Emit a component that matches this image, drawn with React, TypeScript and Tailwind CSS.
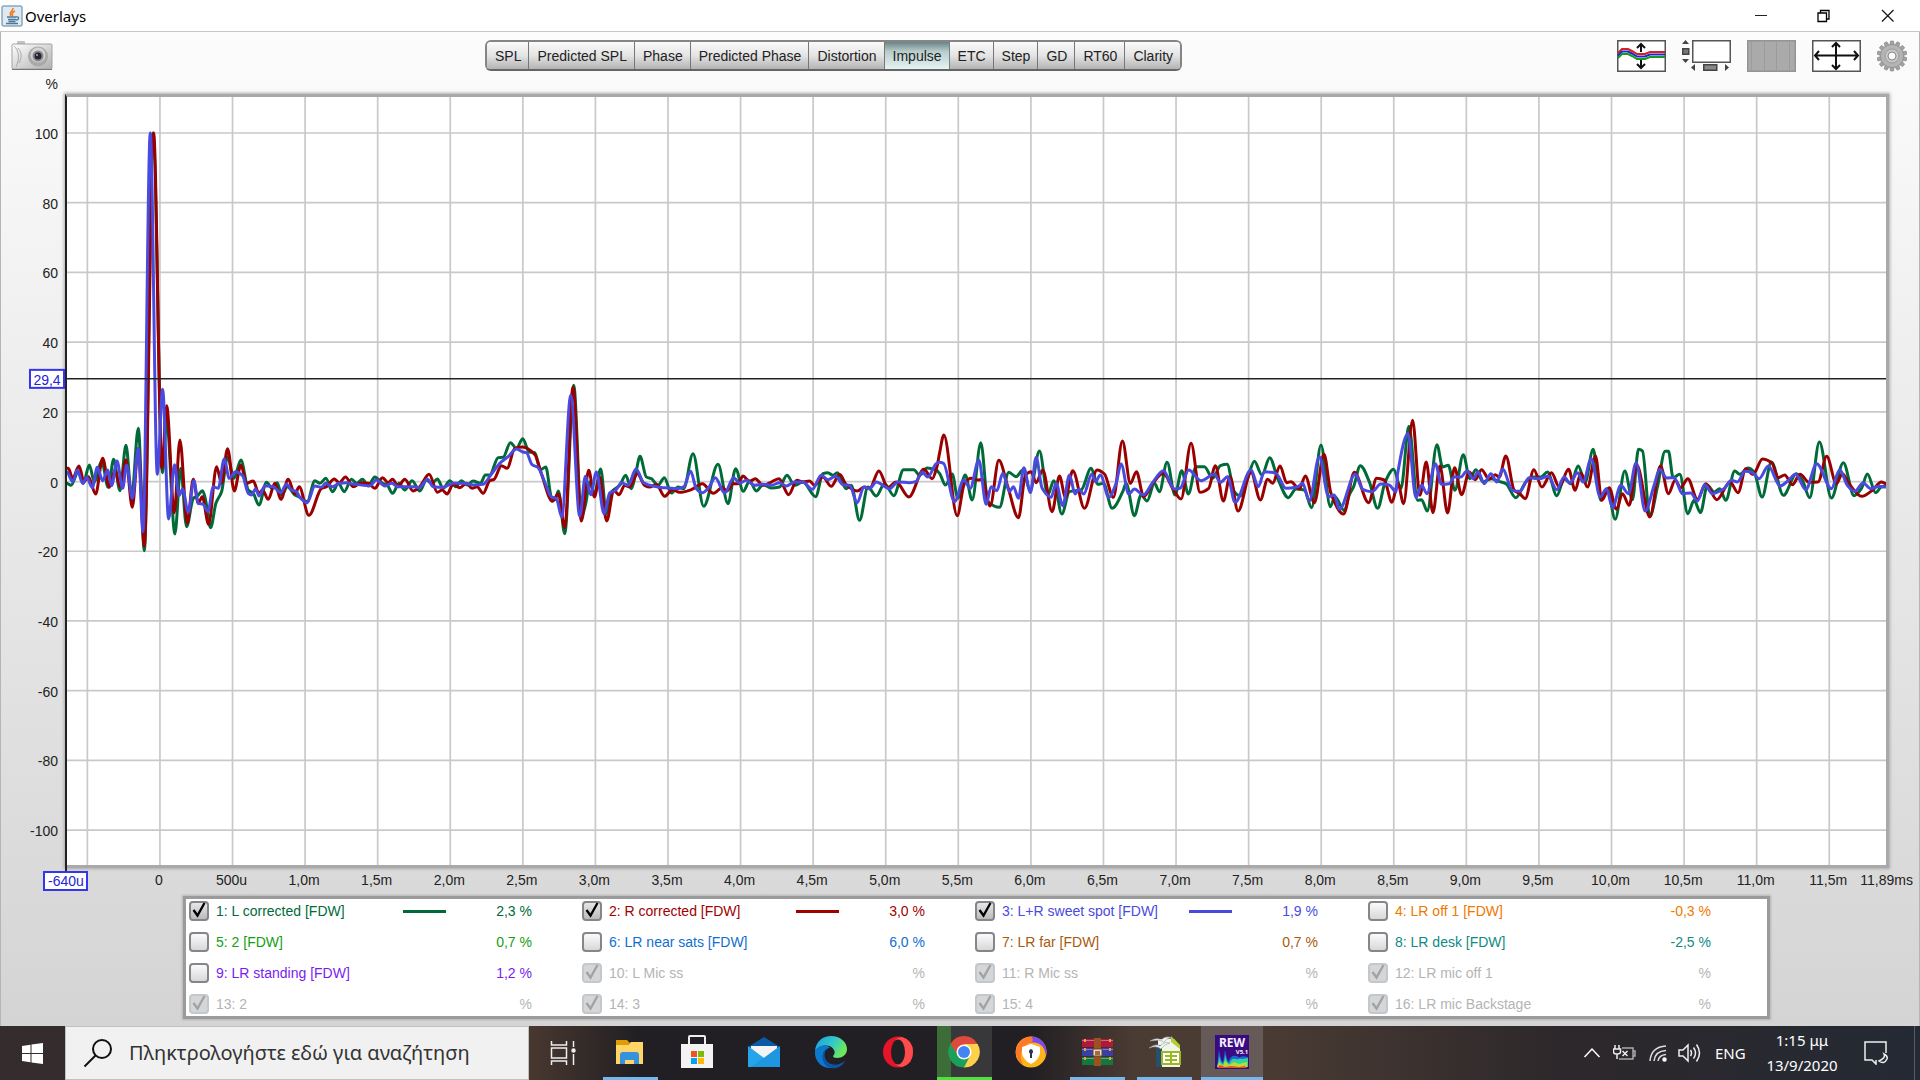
import React from "react";

// The record is stored in four chunks, each with its own start and zero level.
const CHUNKS = [
  { x: -21, zero: 424 },
  { x: 1299, zero: 333 },
  { x: 2619, zero: 184 },
  { x: 3999, zero: 243 },
];

const LEFT = [
  "20,430 33,436 55,395 70,430 88,375 103,425 125,365 145,442 161,358 180,452 198,316 215,470 235,265 253,632 279,-621 308,398 320,240 345,582 362,385 380,560 400,475 412,468 428,452 437,480 452,563 468,490 485,455 503,350 522,415 543,360 565,450 580,460 597,495 620,427 636,445 652,428 665,465 683,440 705,465 717,470 742,485 765,422 780,430 798,415 818,455 836,430 853,455 875,418 890,430 908,418 925,438 945,411 968,430 982,435 998,460 1018,430 1035,450 1057,422 1080,453 1100,420 1115,430 1133,417 1150,445 1170,422 1188,440 1205,422 1222,435 1240,423 1262,430 1277,405 1290,405 1315,353 1330,352 1352,308 1370,325",
  "69,205 88,245 105,247 122,298 138,290 155,380 166,388 176,362 195,490 222,45 245,440 258,400 270,335 284,370 303,296 320,430 335,365 347,355 360,345 378,315 395,355 408,310 421,258 440,320 455,325 475,345 494,322 515,368 535,350 552,355 580,250 612,408 655,282 685,400 708,295 731,363 750,332 770,362 790,343 815,353 840,350 862,315 885,345 910,335 948,379 970,310 985,307 1000,315 1013,307 1040,355 1055,345 1080,450 1105,350 1130,377 1155,340 1183,376 1212,298 1243,298 1260,315 1283,293 1308,298",
  "0,160 18,195 38,162 55,235 77,165 98,240 124,68 145,245 180,262 208,157 230,170 250,150 272,210 300,93 325,225 343,182 367,282 390,215 425,210 455,145 475,193 492,190 518,265 550,215 560,190 585,287 605,225 623,243 645,190 660,215 683,127 707,225 727,152 747,222 770,140 795,140 820,175 843,137 863,133 885,215 902,228 925,175 945,124 968,165 991,113 1015,175 1047,233 1070,207 1095,210 1117,263 1145,75 1173,260 1187,230 1215,272 1230,225 1243,200 1263,137 1290,185 1315,265 1338,185 1363,148",
  "5,265 29,78 55,300 67,298 84,332 113,133 130,200 147,195 167,270 192,163 212,235 230,208 252,245 275,235 298,243 320,250 350,292 380,245 402,230 425,230 445,215 473,286 495,235 515,250 537,197 558,245 582,147 605,300 625,265 648,357 677,212 700,298 718,147 730,152 752,348 775,260 798,153 808,153 822,232 842,222 866,340 885,300 904,337 925,255 945,275 962,265 980,300 1007,212 1022,222 1047,203 1065,215 1089,290 1117,185 1153,285 1192,220 1210,240 1232,292 1261,125 1297,293 1333,187 1365,286 1387,265 1405,221 1430,277 1447,260 1462,258",
];

const RIGHT = [
  "20,385 25,385 38,415 57,378 72,425 85,410 107,462 128,355 148,442 165,390 180,440 198,360 217,502 235,325 253,618 281,-621 306,385 320,197 343,518 360,300 382,550 400,418 415,490 427,470 446,553 470,380 485,430 503,326 523,453 543,375 560,430 580,423 597,460 608,450 625,478 645,430 663,478 685,418 705,462 718,440 747,526 785,445 800,440 823,417 838,428 857,411 880,440 905,428 925,430 945,445 968,413 985,428 998,418 1015,438 1035,418 1060,453 1080,440 1108,403 1133,457 1147,450 1162,462 1180,433 1200,443 1220,430 1237,445 1252,440 1270,460 1290,422 1303,418 1325,377 1342,385 1365,325",
  "69,230 105,252 125,310 158,393 176,370 195,472 220,50 245,452 267,300 284,380 300,320 321,452 342,360 358,373 375,345 390,350 413,310 435,345 450,350 470,342 495,378 518,358 540,366 575,358 608,340 641,369 668,352 682,362 700,340 715,340 730,317 750,333 767,325 790,345 810,338 838,325 867,373 892,330 910,335 930,332 945,345 970,320 995,348 1020,312 1040,343 1073,362 1095,350 1110,355 1138,302 1165,352 1190,335 1228,380 1273,297 1298,325 1312,290",
  "0,100 13,45 53,287 75,190 95,175 115,180 128,178 152,258 178,121 205,200 237,293 258,165 275,155 290,188 310,150 338,275 360,168 378,232 400,152 435,265 473,150 495,162 522,232 549,63 573,190 591,155 613,230 640,190 672,160 700,205 725,237 755,70 782,217 808,205 828,137 852,243 872,170 896,273 935,157 963,240 985,178 1000,190 1022,138 1042,188 1055,185 1080,207 1098,168 1125,248 1154,103 1175,220 1213,282 1245,157 1288,248 1312,175 1335,180 1358,247 1376,190",
  "13,310 40,60 62,285 81,185 101,337 122,197 145,338 166,202 187,283 210,215 228,238 247,208 270,237 288,223 300,230 320,167 345,270 362,280 378,295 404,208 428,260 457,217 480,260 508,207 528,270 545,218 565,260 589,167 608,300 630,262 652,327 670,280 690,315 713,195 752,350 784,197 808,280 828,240 845,262 866,235 895,297 920,250 953,298 993,245 1017,277 1040,205 1062,222 1090,176 1118,187 1138,232 1157,224 1180,253 1203,222 1230,246 1257,245 1283,168 1312,250 1330,220 1350,250 1388,288 1420,270 1447,245 1462,250",
];

const SWEET = [
  "20,395 38,425 52,390 68,430 80,412 97,443 112,382 128,422 143,390 155,437 171,363 188,445 200,375 217,475 235,325 249,575 271,-621 292,403 308,148 326,537 344,374 357,467 368,447 385,517 402,422 415,490 430,493 444,515 460,440 475,445 493,357 508,415 527,395 548,407 565,460 575,465 587,447 598,468 615,437 640,440 662,458 680,433 695,450 710,455 720,472 742,488 765,438 785,442 797,430 818,440 838,430 860,428 880,432 930,437 950,420 975,438 995,430 1015,440 1060,440 1078,443 1103,418 1120,440 1150,442 1180,430 1210,430 1240,435 1270,433 1295,402 1320,370 1345,350 1370,327",
  "69,245 80,247 97,283 115,292 135,335 155,380 170,385 186,440 213,75 240,438 257,318 273,373 290,305 313,430 330,368 348,360 365,337 385,345 409,296 432,337 460,347 490,352 530,355 552,350 573,303 590,355 608,367 625,355 647,322 675,368 702,322 720,338 740,330 765,345 790,342 815,345 840,337 860,347 885,335 910,335 938,357 965,315 985,328 1008,318 1030,343 1050,345 1073,397 1093,350 1110,355 1130,335 1170,355 1195,335 1230,337 1250,333 1268,305 1285,320 1310,280",
  "0,127 12,130 45,245 73,180 92,205 118,120 140,253 155,200 172,212 190,160 210,215 222,200 237,235 253,143 273,218 290,112 308,205 335,232 350,190 370,257 390,165 407,222 418,208 433,222 457,162 468,185 483,165 508,232 530,190 545,132 568,222 585,207 612,225 640,187 672,152 705,207 722,205 748,150 785,182 825,163 843,187 865,170 887,247 935,150 957,200 975,155 1010,160 1040,205 1075,200 1090,190 1110,243 1140,110 1168,230 1185,225 1200,268 1248,163 1270,208 1298,215 1325,192 1350,195 1370,215",
  "-5,220 26,100 50,292 67,255 83,280 108,190 127,252 150,250 165,230 185,230 203,212 222,235 237,215 255,250 275,220 293,245 310,207 340,270 362,273 390,232 420,235 447,228 473,268 495,230 512,248 535,217 552,245 576,175 603,290 622,265 640,322 665,255 688,280 711,187 738,332 765,255 782,207 803,233 825,232 850,280 875,278 895,302 917,253 940,280 975,265 997,240 1015,245 1038,213 1060,217 1080,235 1108,197 1143,257 1165,243 1190,222 1220,268 1253,190 1297,265 1322,208 1345,255 1368,273 1392,248 1415,265 1440,258 1462,260",
];

const ZERO_LEVEL = 1153;

// Monotone cubic through the samples, so peaks are never overshot.
const tracePath = (chunks: string[]) => {
  const pts = chunks.flatMap((points, i) =>
    points.split(" ").map((pair) => {
      const [x, y] = pair.split(",").map(Number);
      return [x + CHUNKS[i].x, y - CHUNKS[i].zero + ZERO_LEVEL];
    })
  );
  const slopes = pts
    .slice(1)
    .map((p, i) => (p[1] - pts[i][1]) / (p[0] - pts[i][0]));
  const tangents = pts.map((_, i) => {
    const a = slopes[i - 1] ?? 0;
    const b = slopes[i] ?? 0;
    return a * b <= 0 ? 0 : (2 * a * b) / (a + b);
  });
  let d = `M${pts[0][0]} ${pts[0][1]}`;
  for (let i = 1; i < pts.length; i++) {
    const h = (pts[i][0] - pts[i - 1][0]) / 3;
    d += `C${pts[i - 1][0] + h} ${pts[i - 1][1] + tangents[i - 1] * h} ${pts[i][0] - h} ${pts[i][1] - tangents[i] * h} ${pts[i][0]} ${pts[i][1]}`;
  }
  return d;
};

const traces = [
  { color: "#006b38", d: tracePath(LEFT) },
  { color: "#990000", d: tracePath(RIGHT) },
  { color: "#4a4ae0", d: tracePath(SWEET) },
];

const xLabels = [
  "", "0", "500u", "1,0m", "1,5m", "2,0m", "2,5m", "3,0m", "3,5m", "4,0m",
  "4,5m", "5,0m", "5,5m", "6,0m", "6,5m", "7,0m", "7,5m", "8,0m", "8,5m",
  "9,0m", "9,5m", "10,0m", "10,5m", "11,0m", "11,5m",
];
const yLabels = [100, 80, 60, 40, 20, 0, -20, -40, -60, -80, -100];

const tabs = [
  "SPL", "Predicted SPL", "Phase", "Predicted Phase", "Distortion",
  "Impulse", "ETC", "Step", "GD", "RT60", "Clarity",
];

type Measurement = {
  label: string;
  value: string;
  text: string;
  line?: string;
  checked?: boolean;
  disabled?: boolean;
};

const off = { value: "%", text: "text-[#b4b4b4]", checked: true, disabled: true };

const measurements: Measurement[] = [
  { label: "1: L corrected [FDW]", value: "2,3 %", text: "text-[#006b38]", line: "bg-[#006b38]", checked: true },
  { label: "2: R corrected [FDW]", value: "3,0 %", text: "text-[#a00000]", line: "bg-[#a00000]", checked: true },
  { label: "3: L+R sweet spot [FDW]", value: "1,9 %", text: "text-[#4a4ae0]", line: "bg-[#4a4ae0]", checked: true },
  { label: "4: LR off 1 [FDW]", value: "-0,3 %", text: "text-[#f07800]" },
  { label: "5: 2 [FDW]", value: "0,7 %", text: "text-[#12a012]" },
  { label: "6: LR near sats [FDW]", value: "6,0 %", text: "text-[#0f6fd0]" },
  { label: "7: LR far [FDW]", value: "0,7 %", text: "text-[#a85a0c]" },
  { label: "8: LR desk [FDW]", value: "-2,5 %", text: "text-[#0f8a84]" },
  { label: "9: LR standing [FDW]", value: "1,2 %", text: "text-[#7a1cf0]" },
  { label: "10: L Mic ss", ...off },
  { label: "11: R Mic ss", ...off },
  { label: "12: LR mic off 1", ...off },
  { label: "13: 2", ...off },
  { label: "14: 3", ...off },
  { label: "15: 4", ...off },
  { label: "16: LR mic Backstage", ...off },
];

const TitleBar = () => (
  <header className="flex h-8 items-center border-b border-[#c4c8c6] bg-white pl-px font-['Noto_Sans','Open_Sans',sans-serif]">
    <svg width="22" height="22" viewBox="0 0 22 22" aria-hidden="true">
      <rect x="1" y="1" width="20" height="20" rx="2" fill="#dfe9f2" stroke="#8ba6bd" strokeWidth="1.5" />
      <path d="M12 3c1 3-5 4-2 8M14 6c-2 1-4 3-2 5" fill="none" stroke="#ee7d22" strokeWidth="1.6" />
      <path d="M6 12h9M7 14.5h8M7.5 16.5h7M15 12c4-1 3 3 0 3M5 18.5h12" fill="none" stroke="#4e7896" strokeWidth="1.3" />
    </svg>
    <h1 className="ml-[2px] flex-1 text-[15px] leading-5 text-black">Overlays</h1>
    <button aria-label="Minimize" className="flex h-full w-[63px] items-center justify-center">
      <svg width="14" height="14" viewBox="0 0 14 14" stroke="#222" fill="none">
        <path d="M1 6.5h12" />
      </svg>
    </button>
    <button aria-label="Restore" className="flex h-full w-[63px] items-center justify-center">
      <svg width="14" height="14" viewBox="0 0 14 14" stroke="#000" strokeWidth="1.3" fill="none">
        <path d="M1 4h8.500v8.500H1zM3.500 4V1.500H12v8.500H9.500" />
      </svg>
    </button>
    <button aria-label="Close" className="flex h-full w-[65px] items-center justify-center">
      <svg width="14" height="14" viewBox="0 0 14 14" stroke="#111" strokeWidth="1.2" fill="none">
        <path d="M1 1l11.500 11.500M12.500 1L1 12.500" />
      </svg>
    </button>
  </header>
);

const CameraIcon = () => (
  <svg width="42" height="31" viewBox="0 0 42 31" aria-hidden="true">
    <defs>
      <linearGradient id="cam" x2="1" y2="1">
        <stop offset="0" stopColor="#fff" />
        <stop offset="1" stopColor="#b0b0b0" />
      </linearGradient>
    </defs>
    <rect x="6" y="1" width="8" height="4" rx="1" fill="#c2c2c2" />
    <rect x="1" y="4" width="40" height="25" rx="1" fill="url(#cam)" stroke="#a3a3a3" />
    <path d="M1 29.5h40" stroke="#777" />
    <path d="M3 6c5 4 6 13 2 21M7 8c4 4 4 10 1 15" fill="none" stroke="#aaa" />
    <circle cx="27" cy="16.5" r="10" fill="#a9a9a9" />
    <circle cx="27" cy="15" r="7.5" fill="#d4d4d4" />
    <circle cx="27" cy="16" r="5.5" fill="#888" />
    <circle cx="27" cy="16" r="3.5" fill="#242434" />
    <circle cx="26" cy="15" r="1" fill="#aaaacc" />
  </svg>
);

const GearIcon = () => (
  <svg width="30" height="32" viewBox="-15 -16 30 32" aria-hidden="true">
    {Array.from({ length: 14 }, (_, i) => (
      <path key={i} d="M-2.200 -11l.7-4h3l.7 4z" fill="#a2a2a2" stroke="#777" strokeWidth=".5" transform={`rotate(${(i * 360) / 14})`} />
    ))}
    <circle r="11.5" fill="#b4b4b4" stroke="#8a8a8a" strokeWidth=".6" />
    <circle r="7" fill="#c8c8c8" stroke="#9b9b9b" />
    <circle r="4" fill="#f8f8f8" stroke="#888" />
  </svg>
);

const Toolbar = () => (
  <div className="flex items-start px-[10px] pt-[8px] pr-[12px]">
    <div className="w-1/4">
      <button aria-label="Capture image" className="block">
        <CameraIcon />
      </button>
    </div>
    <div className="flex overflow-hidden rounded-md border-2 border-[#858585] border-b-[#666]">
      {tabs.map((tab) => (
        <button
          key={tab}
          className={
            tab === "Impulse"
              ? "h-[27px] border-r border-[#708585] bg-linear-to-b from-[#6c8484] via-[#b9cccc] via-35% to-[#e6f3f3] pr-[7px] pl-2 text-sm text-[#1c2424]"
              : "h-[27px] border-r border-[#777] bg-linear-to-b from-[#fafafa] via-[#e4e4e4] to-[#b4b4b4] pr-[7px] pl-2 text-sm text-[#222] last:border-r-0"
          }
        >
          {tab}
        </button>
      ))}
    </div>
    <div className="flex flex-1 justify-end gap-4">
      <button aria-label="Separate traces">
        <svg width="49" height="32" viewBox="0 0 49 32">
          <rect x=".75" y=".75" width="47.5" height="30.5" fill="#fff" stroke="#555" strokeWidth="1.5" />
          <g fill="none" strokeWidth="2">
            <path d="M1 13l4-4h6l4 2 5 3h8l5-2h15" stroke="#d52020" />
            <path d="M1 15.500l4-4h6l4 2 5 3h8l5-2h15" stroke="#2222d0" />
            <path d="M1 18l4-4h6l4 2 5 3h8l5-2h15" stroke="#149a20" />
          </g>
          <path d="M24 12V4M20 8l4-4 4 4M24 20v8M20 24l4 4 4-4" fill="none" stroke="#111" strokeWidth="2" />
        </svg>
      </button>
      <button aria-label="Scrollbars">
        <svg width="49" height="32" viewBox="0 0 49 32">
          <rect x="10.75" y=".75" width="37.5" height="21.5" fill="#fff" stroke="#555" strokeWidth="1.5" />
          <path d="M0 4l3.500-4 3.500 4zM0 19l3.500 4 3.500-4zM13 24v7l-4-3.500zM43 24v7l4-3.500z" fill="#444" />
          <rect x=".75" y="8.75" width="6" height="5.5" fill="#777" stroke="#444" strokeWidth="1.5" />
          <rect x="21.75" y="24.75" width="13" height="5.5" fill="#888" stroke="#444" strokeWidth="1.5" />
        </svg>
      </button>
      <button aria-label="Frequency axis">
        <svg width="49" height="32" viewBox="0 0 49 32">
          <rect x=".75" y=".75" width="47.5" height="30.5" fill="#aaa" stroke="#949494" strokeWidth="1.5" />
          <path d="M4.500 1v30M17.500 1v30M29.500 1v30M42.500 1v30" stroke="#9b9b9b" />
        </svg>
      </button>
      <button aria-label="Graph limits">
        <svg width="49" height="32" viewBox="0 0 49 32" fill="none">
          <rect x=".75" y=".75" width="47.5" height="30.5" fill="#fff" stroke="#555" strokeWidth="1.5" />
          <path d="M3 15.500h43M7 11l-4 4.500 4 4.500M42 11l4 4.500-4 4.500M24 3v26M20 7l4-4 4 4M20 25l4 4 4-4" stroke="#111" strokeWidth="2" />
        </svg>
      </button>
      <button aria-label="Settings">
        <GearIcon />
      </button>
    </div>
  </div>
);

const ImpulseChart = () => (
  <div className="mt-[22px] mr-[30px] ml-[64px] flex min-h-96 flex-1 flex-col border-t-3 border-r-3 border-b-3 border-l-2 border-[#a9a9a9] border-l-[#222] bg-white shadow-[0_0_3px_1px_#aaaaaa]">
    <svg className="min-h-0 w-full flex-1 overflow-visible text-sm" fill="#222" role="img" aria-label="Impulse response">
      {xLabels.map((label, i) => {
        const x = `${1.12 + i * 3.99}%`;
        return (
          <g key={i}>
            <line x1={x} x2={x} y1="0" y2="100%" stroke="#c9c9c9" strokeWidth="1.7" />
            <svg x={x} y="100%" overflow="visible">
              <text x="-1" y="20" textAnchor="middle">{label}</text>
            </svg>
          </g>
        );
      })}
      {yLabels.map((label) => {
        const y = `${50.07 - label * 0.4538}%`;
        return (
          <g key={label}>
            <line x1="0" x2="100%" y1={y} y2={y} stroke="#c9c9c9" strokeWidth="1.7" />
            <svg y={y} overflow="visible">
              <text x="-9" y="6" textAnchor="end">{label}</text>
            </svg>
          </g>
        );
      })}
      <text x="-9" y="-8" textAnchor="end">%</text>
      <svg x="100%" y="100%" overflow="visible">
        <text x="27" y="20" textAnchor="end">11,89ms</text>
      </svg>

      <svg width="100%" height="100%" viewBox="0 0 5460 2304" preserveAspectRatio="none">
        {traces.map((trace) => (
          <path
            key={trace.color}
            d={trace.d}
            fill="none"
            stroke={trace.color}
            strokeWidth="3"
            strokeLinejoin="round"
            vectorEffect="non-scaling-stroke"
          />
        ))}
      </svg>

      {/* Cursor readouts */}
      <line x1="0" x2="100%" y1="36.7%" y2="36.7%" stroke="#222" strokeWidth="1.5" />
      <line x1="-1" x2="-1" y1="99%" y2="101%" stroke="#222" strokeWidth="2" />
      <svg y="36.7%" overflow="visible" fill="#2525d5">
        <rect x="-37" y="-9" width="34" height="18" fill="#fff" stroke="#3535f0" strokeWidth="2" />
        <text x="-20" y="6" textAnchor="middle">29,4</text>
      </svg>
      <svg y="100%" overflow="visible" fill="#2525d5">
        <rect x="-23" y="7" width="43" height="18" fill="#fff" stroke="#3535f0" strokeWidth="2" />
        <text x="-1" y="21" textAnchor="middle">-640u</text>
      </svg>
    </svg>
  </div>
);

const MeasurementRow = ({ item }: { item: Measurement }) => (
  <label className={`flex h-6 items-center text-sm ${item.text}`}>
    <span className="grid size-5 shrink-0">
      <input
        type="checkbox"
        defaultChecked={item.checked}
        disabled={item.disabled}
        className="peer col-start-1 row-start-1 size-5 appearance-none rounded border-2 border-[#85858b] bg-linear-to-b from-[#fafafa] to-[#d8d8d8] checked:from-[#e6e6e6] checked:to-[#bbb] disabled:border-[#c3c8cc] disabled:from-[#d4d6d8] disabled:to-[#d4d6d8]"
      />
      <svg
        viewBox="0 0 20 20"
        className="pointer-events-none col-start-1 row-start-1 hidden size-5 text-black peer-checked:block peer-disabled:text-[#a2a2a2]"
        fill="none"
        stroke="currentColor"
        strokeWidth="2.3"
      >
        <path d="M4.500 9l4 5.500L15.500 2" />
      </svg>
    </span>
    <span className="ml-[7px] w-[187px] whitespace-nowrap">{item.label}</span>
    <span className={`h-[3px] w-[43px] shrink-0 ${item.line ?? ""}`} />
    <span className="w-[86px] text-right">{item.value}</span>
  </label>
);

const Legend = () => (
  <div className="mt-[28px] mr-[149px] mb-[7px] ml-[182px] grid grid-cols-4 gap-y-[7px] border-3 border-[#9b9b9b] bg-white pr-[6px] pl-[3px] shadow-[0_0_2px_1px_#b5b5b5]">
    {measurements.map((item) => (
      <MeasurementRow key={item.label} item={item} />
    ))}
  </div>
);

const StartIcon = () => (
  <svg width="21" height="21" viewBox="0 0 21 21" fill="#fff" aria-hidden="true">
    <path d="M0 3l8.500-1.200V10H0zM9.500 1.600L21 0v10H9.500zM0 11h8.500v8.200L0 18zM9.500 11H21v10L9.500 19.400z" />
  </svg>
);

const ExplorerIcon = () => (
  <svg width="32" height="32" viewBox="0 0 32 32">
    <path d="M2 4h11l3 3-3 3H2z" fill="#e09b06" />
    <path d="M2 9h12l3-3h12v22H2z" fill="#ffd567" />
    <path d="M6 28V19q0-3 3-3h13q3 0 3 3v9h-5v-4h-9v4z" fill="#3692dc" />
  </svg>
);

const StoreIcon = () => (
  <svg width="34" height="34" viewBox="0 0 34 34">
    <path d="M9 10V2q0-1 1-1h14q1 0 1 1v8" fill="none" stroke="#eee" strokeWidth="2" />
    <path d="M1 9h32v24H1z" fill="#f3f3f3" />
    <path d="M11 16h6v6h-6z" fill="#f05222" />
    <path d="M18 16h6v6h-6z" fill="#7fba08" />
    <path d="M11 23h6v6h-6z" fill="#02a4ef" />
    <path d="M18 23h6v6h-6z" fill="#ffb901" />
  </svg>
);

const MailIcon = () => (
  <svg width="34" height="32" viewBox="0 0 34 32">
    <path d="M1 11L17 1l16 10v5H1z" fill="#0a5aa6" />
    <path d="M4 10h26v8L17 24 4 18z" fill="#f4f4f4" />
    <path d="M1 10l16 12L33 10v21H1z" fill="#26a4ea" />
    <path d="M33 10v21H4z" fill="#1689d6" opacity=".5" />
  </svg>
);

const EdgeIcon = () => (
  <svg width="34" height="34" viewBox="0 0 34 34">
    <defs>
      <linearGradient id="edge" x2="1" y2=".4">
        <stop offset="0" stopColor="#1b9de2" />
        <stop offset=".6" stopColor="#35c9c8" />
        <stop offset="1" stopColor="#6de95a" />
      </linearGradient>
    </defs>
    <path d="M1 16C2 6 9 1 17 1c9 0 16 6 16 13 0 6-5 9-10 9-3 0-4-1-4-2 2-2 2-4 1-6-3-6-14-6-19 1z" fill="url(#edge)" />
    <path d="M1 16c4-6 11-7 15-3-5 0-8 5-7 11 1 4 4 7 9 9C8 34 0 26 1 16z" fill="#0b79cc" />
    <path d="M16 13c-5 1-7 7-4 12 4 6 12 6 19 1-3 6-9 8-14 7-6-1-10-8-8-14 1-3 4-6 7-6z" fill="#0c55a5" />
    <path d="M14 16c-1 6 5 11 12 9" stroke="#202327" strokeWidth="2" fill="none" />
  </svg>
);

const OperaIcon = () => (
  <svg width="32" height="32" viewBox="0 0 32 32">
    <ellipse cx="16" cy="16" rx="15" ry="15.5" fill="#e51426" />
    <path d="M20 1q11 3 11 15t-11 15q-4 0-7-3c12 1 12-25 0-24q3-3 7-3z" fill="#ff4b4b" />
    <ellipse cx="16" cy="16" rx="7" ry="12.5" fill="#1f2024" />
  </svg>
);

const ChromeIcon = () => (
  <svg width="32" height="32" viewBox="0 0 32 32">
    <path d="M16 16L2.500 8A15.500 15.500 0 0 1 29.500 8z" fill="#e04a3c" />
    <path d="M16 16l13.500-8A15.500 15.500 0 0 1 16 31.500z" fill="#fdd24a" />
    <path d="M16 16v15.500A15.500 15.500 0 0 1 2.500 8z" fill="#1ba05b" />
    <path d="M16 8h13.500l1 3-8 5z" fill="#fdd24a" />
    <path d="M9.500 19L2.500 8 16 8z" fill="#e04a3c" />
    <path d="M9 19l7 4 6-3-6 11.500-8-5z" fill="#1ba05b" />
    <circle cx="16" cy="16" r="7.5" fill="#fff" />
    <circle cx="16" cy="16" r="6" fill="#4384f3" />
  </svg>
);

const SecureBrowserIcon = () => (
  <svg width="32" height="32" viewBox="0 0 32 32">
    <circle cx="16" cy="16" r="15.5" fill="#fdb51b" />
    <path d="M16 .5A15.500 15.500 0 0 1 31 20C30 10 24 5 14 7z" fill="#7b49f2" />
    <path d="M16 .5A15.500 15.500 0 0 0 8 29C4 20 5 10 17 6q2-3-1-5.500z" fill="#ff7728" />
    <path d="M16 8l9 3v6q-1 7-9 11-8-4-9-11v-6z" fill="#fff" />
    <path d="M16 13a2.500 2.500 0 0 1 1 4.500V22h-2v-4.500a2.500 2.500 0 0 1 1-4.500z" fill="#2a3152" />
  </svg>
);

const WinrarIcon = () => (
  <svg width="33" height="30" viewBox="0 0 33 30">
    <path d="M1 2h31v8H1z" fill="#b3163d" />
    <path d="M1 11h31v8H1z" fill="#3c3ea8" />
    <path d="M1 20h31v8H1z" fill="#11793d" />
    <path d="M1 3.500h31M1 12.500h31M1 21.500h31" stroke="#e4b9c9" opacity=".5" />
    <path d="M4 2v26M29 2v26" stroke="#d7ac3c" strokeWidth="2" strokeDasharray="3 6" />
    <path d="M13 1h7v28h-7z" fill="#9b5221" />
    <path d="M12 12h9v7h-9z" fill="#ddd" stroke="#6b431e" />
    <path d="M14 14h5v4h-5z" fill="#a46a35" />
  </svg>
);

const OfficeIcon = () => (
  <svg width="34" height="34" viewBox="0 0 34 34">
    <path d="M10 4h16l6 7v21H10z" fill="#f0f5e9" />
    <path d="M23 1l9 9v4l-9-7z" fill="#b4cf2f" />
    <path d="M8 10h6v22H8z" fill="#27506e" />
    <path d="M2 6q7-4 11-1 5-5 11-2-6 0-8 4-4-3-14-1zM1 13q7-5 11-2 5-5 10-3-6 1-9 6-4-4-12-1z" fill="#f5f5f5" stroke="#9aa0a5" strokeWidth=".6" />
    <path d="M14 17h18v12H14z" fill="#fff" stroke="#98b921" strokeWidth="2" />
    <path d="M17 21h12M17 25h12M23 18v10" stroke="#98b921" strokeWidth="2" />
  </svg>
);

const RewIcon = () => (
  <svg width="34" height="34" viewBox="0 0 34 34">
    <path d="M0 0h34v34H0z" fill="#3a0a80" />
    <text x="17" y="12" textAnchor="middle" fontSize="12" fontWeight="bold" fill="#f4f0ff">REW</text>
    <text x="27" y="19" textAnchor="middle" fontSize="6" fontWeight="bold" fill="#f4f0ff">V5.1</text>
    <path d="M2 32c1-4 1-12 2-17 1 5 2 11 4 12 1-3 1-7 2-12 1 5 2 8 3 12 3-6 5-7 7-6 2-1 3 2 5 1s4-1 8 0v10z" fill="#1e63d8" />
    <path d="M2 32c1-3 2-7 2-11 1 4 2 7 4 8 1-2 2-6 2-9 1 4 2 7 4 9 2-5 4-6 6-5 3 1 5-1 7 0l6-1v9z" fill="#31d3a0" />
    <path d="M2 32l2-5 4 4 2-5 4 4 5-3 5 2 8-2v5z" fill="#b8dc30" />
    <path d="M2 33l3-3 5 2 6-1 8 1 6-1 2 2z" fill="#ee4a2b" />
  </svg>
);

const idle = "flex h-full w-[55px] items-center justify-center border-b-3 border-transparent";
const running = "flex h-full w-[55px] items-center justify-center border-b-3 border-[#78b7ee]";

const apps = [
  { name: "File Explorer", icon: <ExplorerIcon />, style: running },
  { name: "Store", icon: <StoreIcon />, style: idle },
  { name: "Mail", icon: <MailIcon />, style: idle },
  { name: "Edge", icon: <EdgeIcon />, style: idle },
  { name: "Opera", icon: <OperaIcon />, style: idle },
  {
    name: "Chrome",
    icon: <ChromeIcon />,
    style:
      "flex h-full w-[55px] items-center justify-center border-b-3 border-[#4de33c] bg-linear-to-r from-[#3c6d38] from-26% to-[#38383a] to-26%",
  },
  { name: "Secure Browser", icon: <SecureBrowserIcon />, style: idle },
  { name: "WinRAR", icon: <WinrarIcon />, style: running },
  { name: "OpenOffice", icon: <OfficeIcon />, style: running },
  {
    name: "REW",
    icon: <RewIcon />,
    style:
      "flex h-full w-[62px] items-center justify-center border-b-3 border-[#78b7ee] bg-[#655a58]",
  },
];

const Taskbar = () => (
  <footer className="flex h-[54px] items-stretch bg-linear-to-r from-[#352c2e] via-[#2d282b] to-[#242a34] font-['Noto_Sans','Open_Sans',sans-serif] text-white">
    <button aria-label="Start" className="flex w-[65px] items-center justify-center">
      <StartIcon />
    </button>
    <div className="flex w-[464px] items-center border border-[#bfc3bf] bg-[#f1f1f1] pl-[17px] text-[#333]">
      <svg width="30" height="30" viewBox="0 0 30 30" fill="none" stroke="#111" strokeWidth="2" aria-hidden="true">
        <circle cx="19" cy="11" r="9" />
        <path d="M12.500 17.500L1.500 28.500" />
      </svg>
      <input
        aria-label="Αναζήτηση"
        placeholder="Πληκτρολογήστε εδώ για αναζήτηση"
        className="ml-4 min-w-0 flex-1 bg-transparent text-[20px] leading-7 outline-none placeholder:text-[#333]"
      />
    </div>
    <div className="flex w-[736px] bg-linear-to-r from-[#49382f] to-[#211f23] to-15%">
      <button aria-label="Task View" className="flex w-[68px] items-center justify-center">
        <svg width="26" height="24" viewBox="0 0 26 24" fill="none" stroke="#eee" strokeWidth="1.5">
          <path d="M1.500 0v4h15V0M1.500 24v-4h15v4M1.500 7h15v10h-15zM23.500 0v6M23.500 13v11" />
          <circle cx="23.5" cy="9.5" r="1.5" fill="#fff" />
        </svg>
      </button>
      <nav className="grid flex-1 grid-cols-10 justify-items-center bg-linear-to-r from-transparent from-65% to-[#4a3b33] to-80%">
        {apps.map((app) => (
          <button key={app.name} aria-label={app.name} className={app.style}>
            {app.icon}
          </button>
        ))}
      </nav>
    </div>
    <div className="flex flex-1 items-center justify-end bg-linear-to-r from-[#4a3b33] via-[#2d282b] via-45% to-[#242a34] pr-[5px]">
      <button aria-label="Show hidden icons" className="mr-3">
        <svg width="18" height="12" viewBox="0 0 18 12" fill="none" stroke="#fff" strokeWidth="1.5">
          <path d="M1.500 10L9 2l7.500 8" />
        </svg>
      </button>
      <svg className="mr-[13px]" width="23" height="20" viewBox="0 0 23 20" fill="none" stroke="#eee" strokeWidth="1.5" aria-label="Battery">
        <path d="M2 2v4M6 2v4M0.500 6h7v3q0 2-3.500 2t-3.500-2zM4 11v5" />
        <path d="M9 5h11v11H6M20 8h2v5h-2" stroke="#aaa" />
        <path d="M9.500 8l5 5M14.500 8l-5 5" />
      </svg>
      <svg className="mr-[11px]" width="18" height="20" viewBox="0 0 18 20" fill="none" stroke="#ddd" strokeWidth="1.5" aria-label="Wi-Fi">
        <path d="M1 18Q2 4 17 3M5 18Q6 8 17 7.500M9 18Q10 12 17 11.500" />
        <circle cx="15.5" cy="16.5" r="1.5" fill="#fff" stroke="#fff" />
      </svg>
      <svg className="mr-[13px]" width="24" height="20" viewBox="0 0 24 20" fill="none" stroke="#eee" strokeWidth="1.5" aria-label="Volume">
        <path d="M1 7h4l5-5v16l-5-5H1z" />
        <path d="M12.500 7q2 3 0 6M15.500 4.500q4 5.500 0 11M18.500 1.500q6 8.500 0 17" />
      </svg>
      <span className="w-8 text-[15px] leading-6">ENG</span>
      <time className="ml-[14px] w-[82px] text-center text-[15px] leading-[25px]">
        1:15 μμ
        <br />
        13/9/2020
      </time>
      <button aria-label="Notifications" className="mr-[26px] ml-[21px]">
        <svg width="24" height="24" viewBox="0 0 24 24" fill="none" stroke="#eee" strokeWidth="1.5">
          <path d="M22 12V1H1v18h7l4 4v-4" />
          <path d="M20 13q2 4-5 7 5 4 8-2 1-3-3-5z" />
        </svg>
      </button>
      <span className="h-full w-px bg-[#555b64]" />
    </div>
  </footer>
);

const App = () => {
  return (
    <div className="flex min-h-screen flex-col font-['Liberation_Sans',Arial,sans-serif]">
      <TitleBar />
      <main className="flex flex-1 flex-col border-x border-[#b5b5b5] bg-linear-to-b from-[#fcfcfc] to-[#d4d4d4]">
        <Toolbar />
        <ImpulseChart />
        <Legend />
      </main>
      <Taskbar />
    </div>
  );
};

export default App;
